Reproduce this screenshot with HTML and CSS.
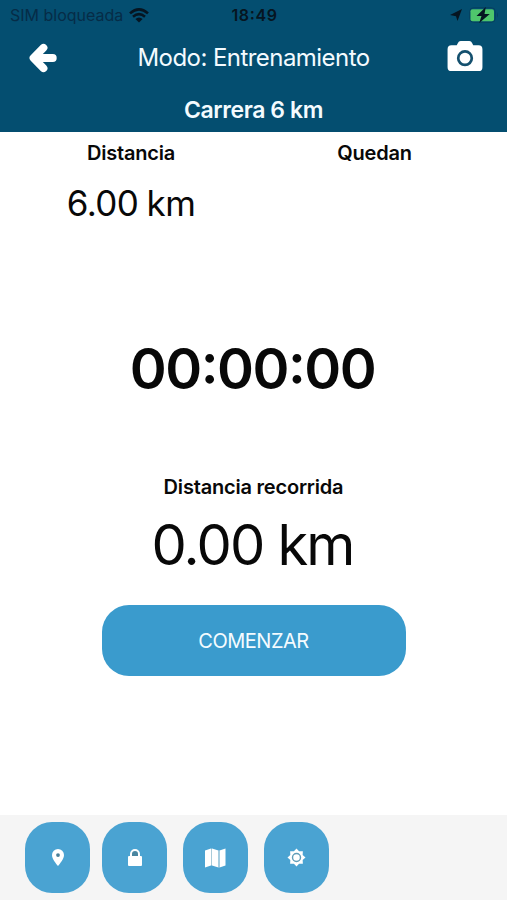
FILE: index.html
```html
<!DOCTYPE html>
<html lang="es">
<head>
    <meta charset="UTF-8">
    <meta name="viewport" content="width=device-width, initial-scale=1.0">
    <title>Modo: Entrenamiento</title>
    <link rel="stylesheet" href="styles.css">
</head>
<body>
    <header class="header">
        <div class="status-bar">
            <div class="carrier">
                <span>SIM bloqueada</span>
                <svg class="wifi" viewBox="0 0 20 15" aria-hidden="true">
                    <path d="M1 5.4Q10-2.6 19 5.4M4 8.7Q10 3.6 16 8.7" fill="none" stroke="#061521" stroke-width="2.6"/>
                    <path d="M6.4 11Q10 8 13.6 11L10 14.6z" fill="#061521"/>
                </svg>
            </div>
            <span class="clock">18:49</span>
            <div class="indicators">
                <svg class="location" viewBox="0 0 12 12" aria-hidden="true">
                    <path d="M12 0L7.500 12 6 7.200 0 6z" fill="#061521"/>
                </svg>
                <svg class="battery" viewBox="0 0 30 16" aria-hidden="true">
                    <rect x=".7" y=".7" width="25.600" height="14.600" rx="4" fill="none" stroke="#07405f" stroke-width="1"/>
                    <path d="M28 5.500q2 2.500 0 5z" fill="#07405f"/>
                    <rect x="1.500" y="2.200" width="23.500" height="12" rx="2" fill="#4fc66c"/>
                    <path d="M16.800 0L7.500 8.900h5L10.200 16 20.800 6.900H15.500z" fill="#061521"/>
                </svg>
            </div>
        </div>
        <nav class="navbar">
            <button class="nav-button" aria-label="Volver">
                <svg class="arrow" viewBox="0 0 28 30" aria-hidden="true">
                    <path d="M14.500 4.800L4.500 15l10 10.200M6 15h17.800" fill="none" stroke="#fff" stroke-width="7.800" stroke-linecap="round" stroke-linejoin="round"/>
                </svg>
            </button>
            <h1 class="mode">Modo: Entrenamiento</h1>
            <button class="nav-button" aria-label="Cámara">
                <svg class="camera" viewBox="0 0 36 32" aria-hidden="true">
                    <path d="M4 4.500h5.500l1.200-2.500Q11.500 0 13.500 0h9q2 0 2.800 2l1.200 2.500H32q4 0 4 4V27q0 4-4 4H4q-4 0-4-4V8.500q0-4 4-4z" fill="#fff"/>
                    <circle cx="18" cy="17.700" r="7" fill="none" stroke="#14506e" stroke-width="2.800"/>
                </svg>
            </button>
        </nav>
        <h2 class="race">Carrera 6 km</h2>
    </header>

    <main class="content">
        <div class="stats">
            <div class="stat">
                <h3 class="label">Distancia</h3>
                <p class="stat-value">6.00 km</p>
            </div>
            <div class="stat">
                <h3 class="label">Quedan</h3>
            </div>
        </div>
        <div class="timer">00:00:00</div>
        <h3 class="label label-covered">Distancia recorrida</h3>
        <p class="covered">0.00 km</p>
        <button class="start">COMENZAR</button>
    </main>

    <footer class="toolbar">
        <button class="tool" aria-label="Ubicación">
            <svg class="icon-pin" viewBox="0 0 12 17" aria-hidden="true">
                <path d="M6 0a6 6 0 0 1 6 6c0 4-3.800 8.200-6 11C3.800 14.200 0 10 0 6a6 6 0 0 1 6-6z" fill="#fff"/>
                <circle cx="6" cy="6.100" r="1.900" fill="#4a7f98"/>
            </svg>
        </button>
        <button class="tool" aria-label="Bloquear">
            <svg class="icon-lock" viewBox="0 0 14 17" aria-hidden="true">
                <path d="M3 8V5a4 4 0 0 1 8 0v3" fill="#4a86a0" stroke="#fff" stroke-width="2"/>
                <rect y="7" width="14" height="10" rx="1" fill="#fff"/>
            </svg>
        </button>
        <button class="tool" aria-label="Mapa">
            <svg class="icon-map" viewBox="0 0 21 20" aria-hidden="true">
                <path d="M0 2.500L6 .5v17l-6 2zM7 .5l6.500 2v17L7 17.500zM14.500 2.500l6-2v17l-6 2z" fill="#fff"/>
                <path d="M6.500.5v17M14 2.500v17" stroke="#a9cbd9"/>
            </svg>
        </button>
        <button class="tool" aria-label="Ajustes">
            <svg class="icon-settings" viewBox="0 0 20 20" aria-hidden="true">
                <path d="M10 .5l2.700 3 4-.2-.2 4 3 2.700-3 2.700.2 4-4-.2-2.700 3-2.700-3-4 .2.200-4-3-2.700 3-2.700-.2-4 4 .2z" fill="#fff"/>
                <circle cx="10" cy="10" r="4.200" fill="none" stroke="#609db8" stroke-width="1.500"/>
            </svg>
        </button>
    </footer>
</body>
</html>
```

FILE: styles.css
```css
* {
    box-sizing: border-box;
}

body {
    margin: 0;
    height: 900px;
    display: flex;
    flex-direction: column;
    font-family: Inter, "Liberation Sans", sans-serif;
    background-color: white;
    color: #080808;
    overflow: hidden;
}

h1, h2, h3, p {
    margin: 0;
    white-space: nowrap;
}

button {
    border: none;
    padding: 0;
    font-family: inherit;
    cursor: pointer;
}

svg {
    display: block;
}

.header {
    height: 132px;
    background-color: #044e70;
    color: #f4fbff;
}

.status-bar {
    display: grid;
    grid-template-columns: 1fr auto 1fr;
    align-items: center;
    height: 30px;
    padding: 0 8px 0 10px;
    color: #061d30;
    font-size: 16px;
}

.carrier {
    display: flex;
    align-items: center;
    gap: 6px;
    color: #062c47;
}

.wifi {
    width: 20px;
    height: 15px;
}

.clock {
    font-weight: 600;
    letter-spacing: 0.6px;
    font-feature-settings: "case" 1;
    color: #061521;
}

.indicators {
    display: flex;
    align-items: center;
    justify-content: flex-end;
    gap: 7px;
}

.location {
    width: 12px;
    height: 12px;
}

.battery {
    width: 30px;
    height: 16px;
}

.navbar {
    display: flex;
    align-items: center;
    justify-content: space-between;
    height: 56px;
    padding: 0 24px 0 29px;
}

.nav-button {
    background: none;
}

.arrow {
    width: 28px;
    height: 30px;
}

.camera {
    width: 36px;
    height: 31px;
    margin-bottom: 3px;
}

.mode {
    padding-left: 3px;
    font-size: 24px;
    font-weight: 400;
    letter-spacing: -0.55px;
    line-height: 54px;
}

.race {
    font-size: 23px;
    font-weight: 600;
    letter-spacing: -0.4px;
    line-height: 49px;
    text-align: center;
}

.content {
    flex: 1;
    display: flex;
    flex-direction: column;
    align-items: center;
}

.stats {
    display: grid;
    grid-template-columns: 262px 225px;
    width: 100%;
    height: 196px;
    text-align: center;
}

.label {
    font-size: 20px;
    font-weight: 600;
    letter-spacing: -0.2px;
    line-height: 42px;
}

.stat-value {
    font-size: 35px;
    letter-spacing: -0.6px;
    word-spacing: -1px;
    line-height: 58px;
}

/* "case" lifts the colons to the middle of the digits */
.timer {
    padding-right: 2px;
    font-size: 56px;
    font-weight: 600;
    letter-spacing: -1.5px;
    font-feature-settings: "case" 1;
    line-height: 83px;
}

.label-covered {
    margin-top: 55px;
}

.covered {
    padding-right: 2px;
    font-size: 56px;
    letter-spacing: -1.8px;
    line-height: 74px;
}

.start {
    width: 304px;
    height: 71px;
    margin-top: 23px;
    border-radius: 27px;
    background-color: #3a9bcd;
    color: #f4fbff;
    font-size: 20px;
    letter-spacing: -0.5px;
}

.toolbar {
    display: flex;
    gap: 16px;
    height: 85px;
    padding: 7px 25px;
    background-color: #f5f5f5;
}

.tool {
    display: flex;
    align-items: center;
    justify-content: center;
    width: 65px;
    height: 71px;
    border-radius: 27px;
    background-color: #4aa3d2;
}

.tool:first-child {
    margin-right: -4px;
}

.icon-pin {
    width: 12px;
    height: 17px;
}

.icon-lock {
    width: 14px;
    height: 17px;
}

.icon-map {
    width: 21px;
    height: 20px;
}

.icon-settings {
    width: 19px;
    height: 19px;
}
```
